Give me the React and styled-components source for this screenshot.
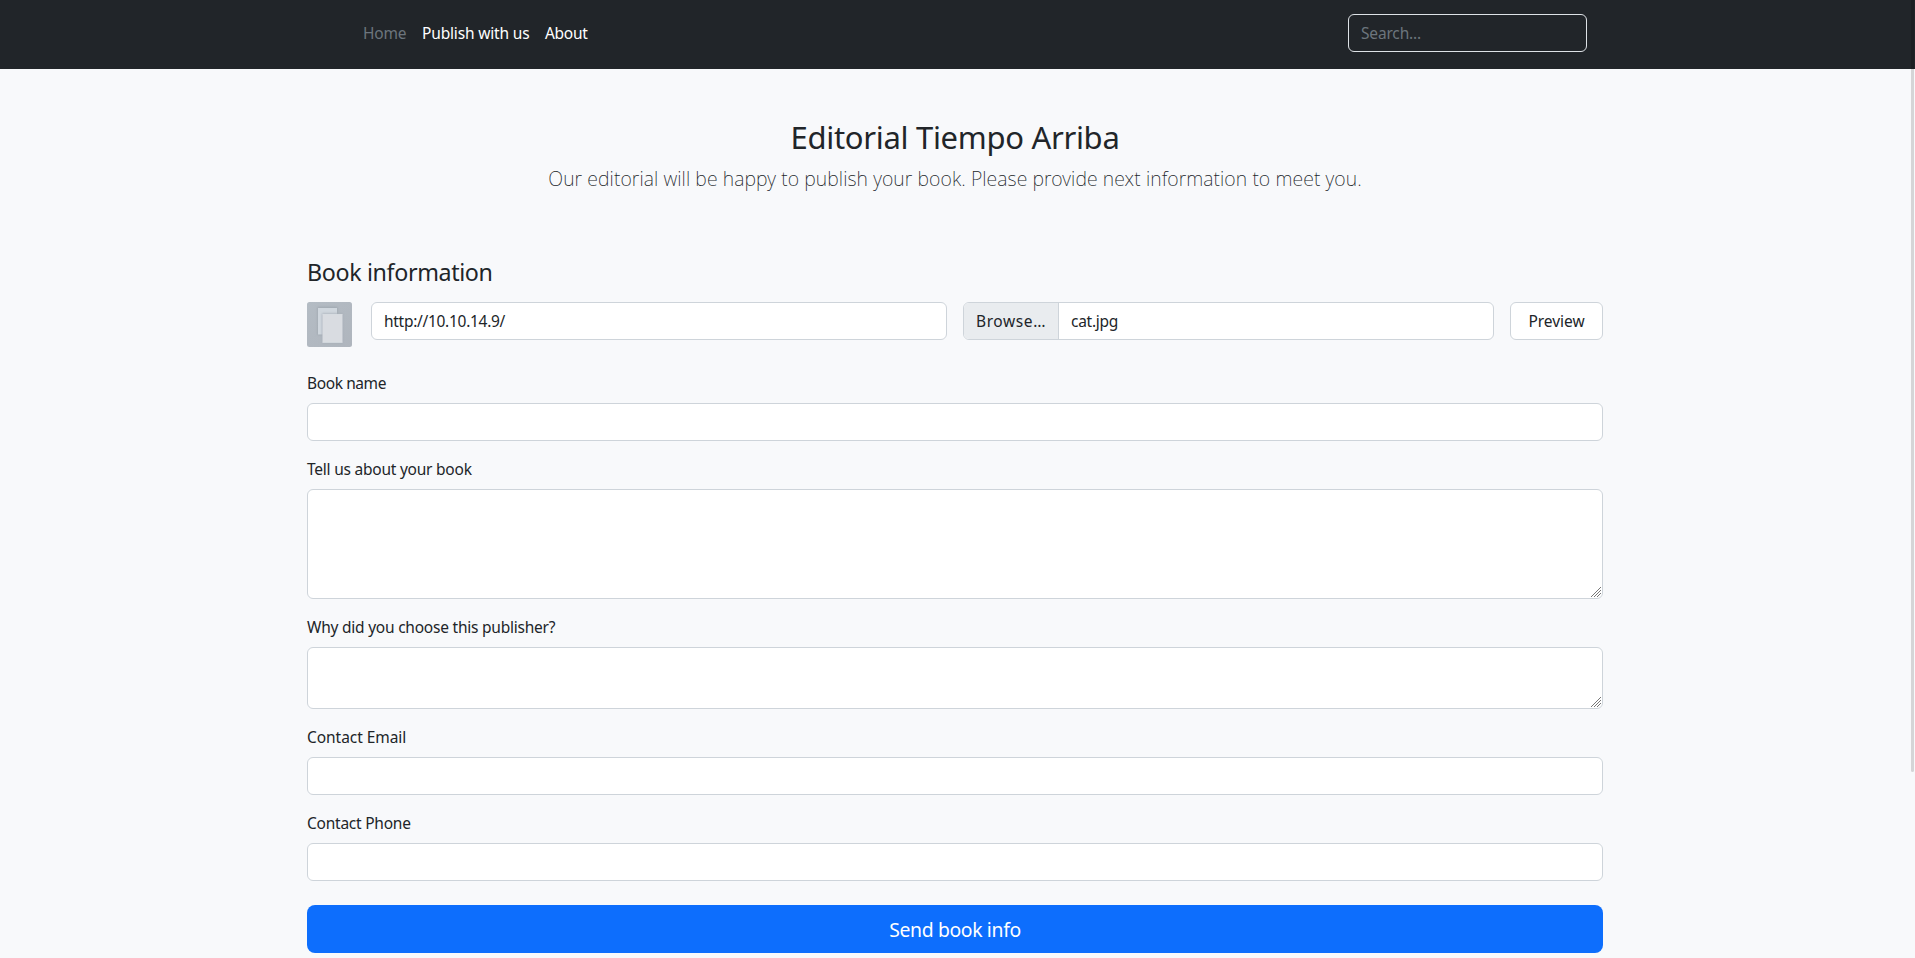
import React from "react";
import styled, { createGlobalStyle } from "styled-components";

const GlobalStyle = createGlobalStyle`
  *, *::before, *::after { box-sizing: border-box; }
  body {
    margin: 0;
    height: 958px;
    overflow: hidden;
    background: #f8f9fb;
    color: #212529;
    font: 400 15.5px/24px "Noto Sans", "Open Sans", sans-serif;
  }
  input, textarea, button { font: inherit; color: inherit; letter-spacing: inherit; }
`;

const Header = styled.header`
  display: flex;
  justify-content: center;
  height: 69px;
  padding-top: 14px;
  padding-right: 5px;
  background: #212529;
`;

const HeaderInner = styled.div`
  display: flex;
  justify-content: space-between;
  align-items: flex-start;
  width: 1264px;
  padding: 0 0 0 40px;
`;

const NavList = styled.nav`
  display: flex;
  gap: 16px;
  padding-top: 7px;
`;

const NavLink = styled.a`
  width: ${(p) => p.$width}px;
  color: ${(p) => (p.$active ? "#6c757d" : "#fff")};
  letter-spacing: ${(p) => p.$tracking}px;
  text-decoration: none;
  white-space: nowrap;
`;

const SearchInput = styled.input`
  width: 239px;
  height: 38px;
  padding: 6px 12px;
  border: 1px solid #dee2e6;
  border-radius: 6px;
  background: transparent;
  letter-spacing: -0.17px;
  outline: none;
  &::placeholder { color: #6c757d; opacity: 1; }
`;

const Main = styled.main`
  width: 1296px;
  margin: 0 0 0 307px;
`;

const Intro = styled.section`
  padding: 49px 0 64px;
  text-align: center;
`;

const Title = styled.h2`
  margin: 0 0 7px;
  font-size: 31px;
  font-weight: 380;
  line-height: 39px;
  letter-spacing: -0.305px;
`;

const Lead = styled.p`
  margin: 0;
  font-size: 19.5px;
  font-weight: 250;
  line-height: 30px;
  letter-spacing: 0.085px;
`;

const SectionTitle = styled.h4`
  margin: 0 0 15px;
  font-size: 23.25px;
  font-weight: 380;
  line-height: 29px;
  letter-spacing: -0.36px;
`;

const SourceRow = styled.div`
  display: flex;
  align-items: flex-start;
  height: 45px;
  margin-bottom: 24px;
`;

const Cover = styled.svg`
  flex: none;
  width: 45px;
  height: 45px;
  margin-right: 19px;
`;

const TextInput = styled.input`
  display: block;
  width: ${(p) => p.$width || "100%"};
  height: 38px;
  padding: 6px 12px;
  border: 1px solid #ced4da;
  border-radius: 6px;
  background: #fff;
  letter-spacing: -0.29px;
  outline: none;
`;

const FilePicker = styled.div`
  display: flex;
  width: 531px;
  height: 38px;
  margin: 0 16px;
  overflow: hidden;
  border: 1px solid #ced4da;
  border-radius: 6px;
  background: #fff;
`;

const BrowseButton = styled.span`
  width: 95px;
  padding: 6px 0 6px 12px;
  border-right: 1px solid #ced4da;
  background: #e9ecef;
  letter-spacing: 0.6px;
`;

const FileName = styled.span`
  padding: 6px 12px;
  letter-spacing: -0.27px;
`;

const PreviewButton = styled.button`
  width: 93px;
  height: 38px;
  padding: 0;
  border: 1px solid #ced4da;
  border-radius: 6px;
  background: #fff;
  letter-spacing: -0.03px;
`;

const Field = styled.div`
  margin-bottom: ${(p) => p.$gap || 16}px;
`;

const Label = styled.label`
  display: block;
  margin-bottom: 8px;
  letter-spacing: ${(p) => p.$tracking}px;
`;

const TextArea = styled.textarea`
  display: block;
  width: 100%;
  height: ${(p) => p.$height}px;
  padding: 6px 12px;
  border: 1px solid #ced4da;
  border-radius: 6px;
  background: #fff;
  outline: none;
  resize: none;
`;

const AreaBox = styled.div`
  display: grid;
  > * { grid-area: 1 / 1; }
`;

const Grip = styled.svg`
  align-self: end;
  justify-self: end;
  width: 10px;
  height: 10px;
  margin: 0 2px 2px 0;
  pointer-events: none;
`;

const SubmitButton = styled.button`
  width: 100%;
  height: 48px;
  padding: 2px 0 0;
  border: 0;
  border-radius: 8px;
  background: #0d6efd;
  color: #fff;
  font-size: 19.4px;
  line-height: 30px;
  letter-spacing: -0.36px;
`;

const ScrollThumb = styled.div`
  position: fixed;
  top: 0;
  right: 1px;
  width: 3px;
  height: 772px;
  border-radius: 0 0 2px 2px;
  background: rgba(0, 0, 0, 0.14);
`;

function BookCover() {
  return (
    <Cover viewBox="0 0 45 45">
      <defs>
        <linearGradient id="backdrop" x1="0" y1="0" x2="1" y2="1">
          <stop offset="0" stopColor="#b4bcc4" />
          <stop offset="1" stopColor="#afb5bd" />
        </linearGradient>
        <filter id="soft" x="-20%" y="-20%" width="140%" height="140%">
          <feGaussianBlur stdDeviation="0.8" />
        </filter>
      </defs>
      <rect width="45" height="45" rx="2.5" fill="url(#backdrop)" />
      <rect x="10.5" y="5" width="20" height="28" fill="#9fa7b0" filter="url(#soft)" />
      <rect x="11" y="6" width="19" height="26.5" fill="#d0d7de" />
      <rect x="15" y="11.5" width="21" height="30" fill="#a7afb8" filter="url(#soft)" />
      <rect x="15.5" y="12.5" width="20" height="28" fill="#d9dce1" />
      <path d="M15.5 12.5h20M15.5 40.3h20" stroke="#e0e4e8" strokeWidth="0.7" />
    </Cover>
  );
}

function ResizableArea({ id, height }) {
  return (
    <AreaBox>
      <TextArea id={id} $height={height} />
      <Grip viewBox="0 0 10 10">
        <path d="M0 10 10 0M3 10l7-7M6 10l4-4" stroke="#777" strokeWidth="1" />
      </Grip>
    </AreaBox>
  );
}

export default function App() {
  return (
    <>
      <GlobalStyle />
      <Header>
        <HeaderInner>
          <NavList>
            <NavLink $active $width={43} $tracking={-0.24}>Home</NavLink>
            <NavLink $width={107} $tracking={-0.16}>Publish with us</NavLink>
            <NavLink $width={44} $tracking={-0.3}>About</NavLink>
          </NavList>
          <SearchInput placeholder="Search..." />
        </HeaderInner>
      </Header>
      <Main>
        <Intro>
          <Title>Editorial Tiempo Arriba</Title>
          <Lead>
            Our editorial will be happy to publish your book. Please provide next information to meet you.
          </Lead>
        </Intro>
        <SectionTitle>Book information</SectionTitle>
        <SourceRow>
          <BookCover />
          <TextInput $width="576px" defaultValue="http://10.10.14.9/" />
          <FilePicker>
            <BrowseButton>Browse…</BrowseButton>
            <FileName>cat.jpg</FileName>
          </FilePicker>
          <PreviewButton>Preview</PreviewButton>
        </SourceRow>
        <Field>
          <Label htmlFor="name" $tracking={-0.4}>Book name</Label>
          <TextInput id="name" />
        </Field>
        <Field>
          <Label htmlFor="about" $tracking={-0.23}>Tell us about your book</Label>
          <ResizableArea id="about" height={110} />
        </Field>
        <Field>
          <Label htmlFor="reason" $tracking={-0.23}>Why did you choose this publisher?</Label>
          <ResizableArea id="reason" height={62} />
        </Field>
        <Field>
          <Label htmlFor="email" $tracking={-0.05}>Contact Email</Label>
          <TextInput id="email" />
        </Field>
        <Field $gap={24}>
          <Label htmlFor="phone" $tracking={-0.24}>Contact Phone</Label>
          <TextInput id="phone" />
        </Field>
        <SubmitButton>Send book info</SubmitButton>
      </Main>
      <ScrollThumb />
    </>
  );
}
